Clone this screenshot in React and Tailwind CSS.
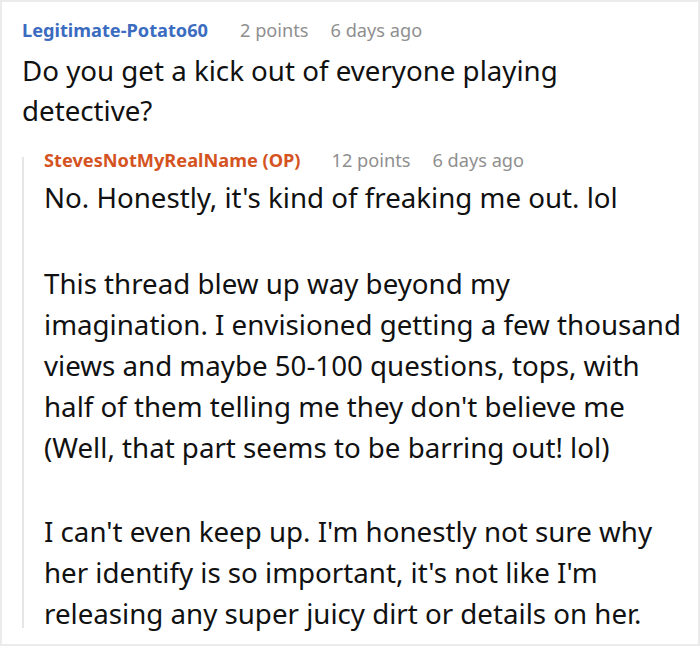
export default function App() {
  const font = { fontFamily: '"Noto Sans", "Open Sans", sans-serif' };
  return (
    <div className="w-[700px] h-[646px] bg-white border-2 border-[#ebebeb] overflow-hidden" style={font}>
      <div className="pl-[20px] pt-[13px]">
        <div className="flex items-center h-[30px] text-[18.2px] leading-[30px]">
          <span className="font-bold text-[#3b6cc0]">Legitimate-Potato60</span>
          <span className="ml-[32px] text-[#8f8f8f]">2 points</span>
          <span className="ml-[22px] text-[#8f8f8f]">6 days ago</span>
        </div>
        <p className="text-[27.7px] leading-[40px] text-[#111] mt-[5px] whitespace-nowrap">
          Do you get a kick out of everyone playing
          <br />
          detective?
        </p>
        <div className="mt-[27px] flex flex-col h-[471px] border-l-2 border-[#e6e6e6] pl-[20px]">
          <div className="-mt-[12px] flex items-center h-[30px] text-[18.2px] leading-[30px]">
            <span className="font-bold text-[#d4531f]">StevesNotMyRealName (OP)</span>
            <span className="ml-[31px] text-[#8f8f8f]">12 points</span>
            <span className="ml-[22px] text-[#8f8f8f]">6 days ago</span>
          </div>
          <div className="text-[27.7px] leading-[41px] text-[#111] mt-[2px] whitespace-nowrap">
            <p>No. Honestly, it's kind of freaking me out. lol</p>
            <p className="mt-[45px]">
              This thread blew up way beyond my
              <br />
              imagination. I envisioned getting a few thousand
              <br />
              views and maybe 50-100 questions, tops, with
              <br />
              half of them telling me they don't believe me
              <br />
              (Well, that part seems to be barring out! lol)
            </p>
            <p className="mt-[43px]">
              I can't even keep up. I'm honestly not sure why
              <br />
              her identify is so important, it's not like I'm
              <br />
              releasing any super juicy dirt or details on her.
            </p>
          </div>
        </div>
      </div>
    </div>
  );
}
